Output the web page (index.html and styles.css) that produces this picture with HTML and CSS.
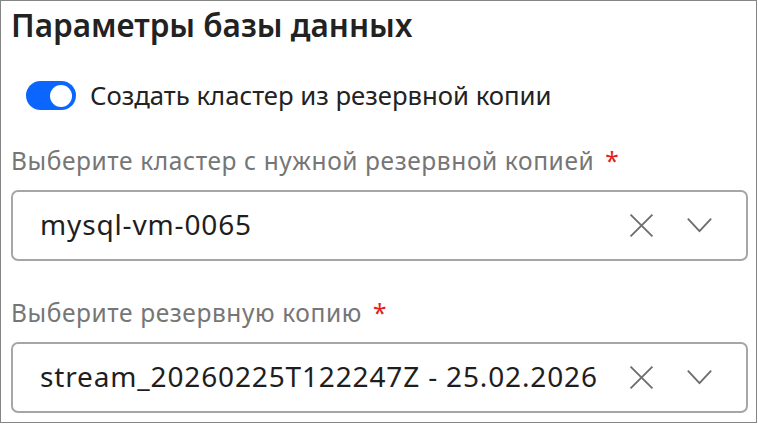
FILE: index.html
```html
<!DOCTYPE html>
<html lang="ru">
<head>
<meta charset="utf-8">
<link rel="stylesheet" href="styles.css">
</head>
<body>
<div class="panel">
  <h1 class="title">Параметры базы данных</h1>
  <label class="toggle-row">
    <span class="toggle"><span class="knob"></span></span>
    <span class="toggle-text">Создать кластер из резервной копии</span>
  </label>
  <div class="field first">
    <div class="label">Выберите кластер с нужной резервной копией <span class="req">*</span></div>
    <div class="select">
      <span class="value">mysql-vm-0065</span>
      <span class="icons">
        <svg class="icon" viewBox="0 0 24 24"><path d="M1.5 1.5 L22.5 22.5 M22.5 1.5 L1.5 22.5"/></svg>
        <svg class="icon" viewBox="0 0 24 24"><path d="M0.8 5.5 L12 17.5 L23.2 5.5"/></svg>
      </span>
    </div>
  </div>
  <div class="field second">
    <div class="label">Выберите резервную копию <span class="req">*</span></div>
    <div class="select">
      <span class="value">stream_20260225T122247Z - 25.02.2026</span>
      <span class="icons">
        <svg class="icon" viewBox="0 0 24 24"><path d="M1.5 1.5 L22.5 22.5 M22.5 1.5 L1.5 22.5"/></svg>
        <svg class="icon" viewBox="0 0 24 24"><path d="M0.8 5.5 L12 17.5 L23.2 5.5"/></svg>
      </span>
    </div>
  </div>
</div>
</body>
</html>
```
FILE: styles.css
```css
html, body {
  margin: 0;
  padding: 0;
  background: #fff;
}
body {
  font-family: "Noto Sans", "Open Sans", sans-serif;
}
.panel {
  width: 757px;
  height: 423px;
  box-sizing: border-box;
  border: 1px solid #858585;
  padding: 4px 8px 0 10px;
  display: flex;
  flex-direction: column;
}
.title {
  margin: 0;
  font-size: 31.5px;
  line-height: 40px;
  font-weight: 600;
  color: #222;
}
.toggle-row {
  display: flex;
  align-items: center;
  margin-top: 36px;
  margin-left: 15px;
  height: 29px;
  gap: 14px;
}
.toggle {
  width: 50px;
  height: 29px;
  border-radius: 15px;
  background: #0b66ff;
  display: flex;
  align-items: center;
  justify-content: flex-end;
  padding-right: 4px;
  box-sizing: border-box;
}
.knob {
  width: 22px;
  height: 22px;
  border-radius: 50%;
  background: #fff;
}
.toggle-text {
  font-size: 25.7px;
  line-height: 29px;
  color: #222;
}
.field.first { margin-top: 35px; }
.field.second { margin-top: 36px; }
.label {
  font-size: 24.5px;
  line-height: 32px;
  letter-spacing: 0.6px;
  color: #767676;
}
.req {
  color: #e3211c;
  margin-left: 4px;
}
.select {
  margin-top: 13px;
  height: 71px;
  box-sizing: border-box;
  border: 2px solid #a6a6a6;
  border-radius: 7px;
  display: flex;
  align-items: center;
  padding: 0 34px 4px 27px;
}
.value {
  flex: 1;
  font-size: 28px;
  line-height: 38px;
  letter-spacing: 0.85px;
  color: #1e1e1e;
  white-space: nowrap;
}
.icons {
  display: flex;
  gap: 33px;
  align-items: center;
  padding-top: 4px;
}
.icon {
  width: 25px;
  height: 25px;
  fill: none;
  stroke: #6e6e6e;
  stroke-width: 1.8;
}
```
